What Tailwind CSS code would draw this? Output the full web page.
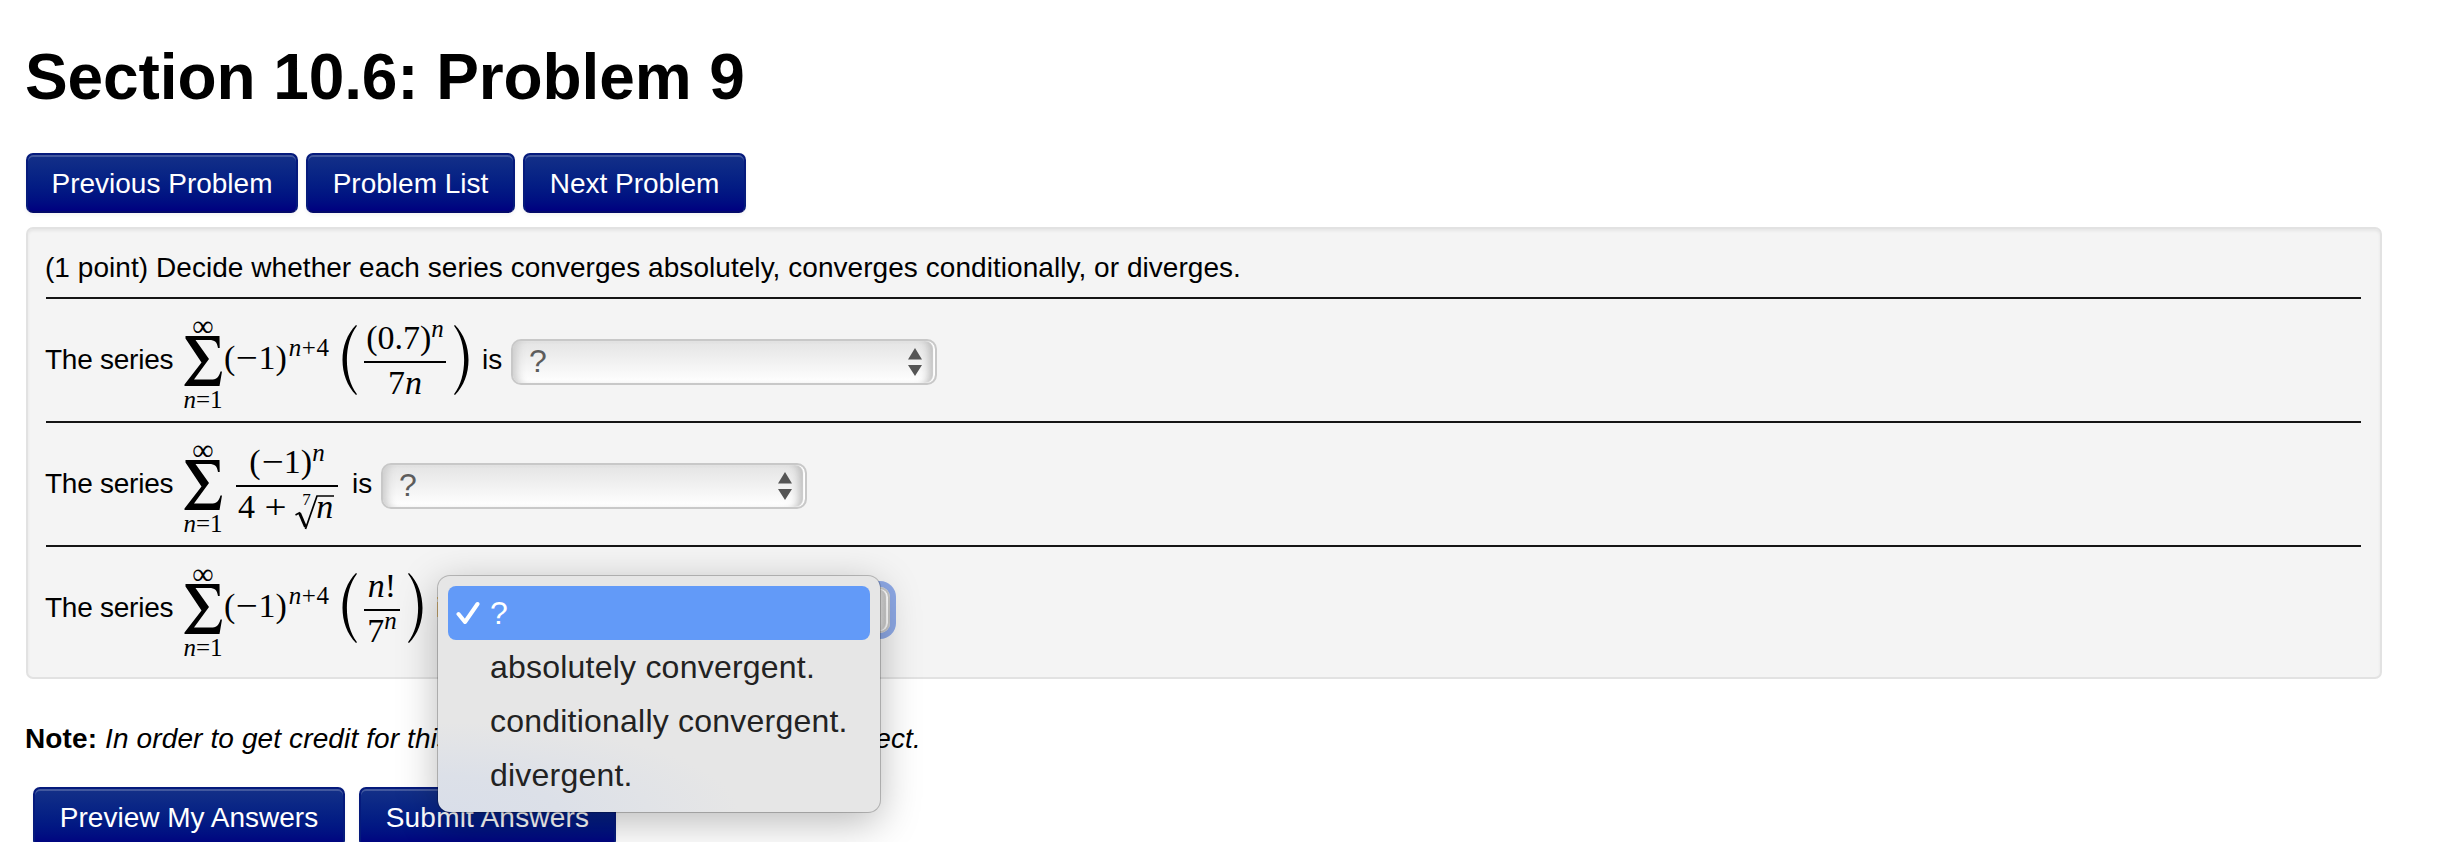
<!DOCTYPE html>
<html lang="en">
<head>
<meta charset="utf-8">
<title>Section 10.6: Problem 9</title>
<script src="https://cdn.jsdelivr.net/npm/@tailwindcss/browser@4"></script>
</head>
<body class="bg-white text-black">
<div class="relative h-[842px] w-[2456px] overflow-hidden pl-[26px] pt-[45px] font-['Liberation_Sans',Arial,sans-serif] text-[28px]">
  <svg class="hidden">
    <symbol id="sigma" viewBox="0 0 38 50"><path d="M1.500 0H35.500L35.700 12H34C33 6 31 4 25 4H11.500L25 23L10 43.500H27C32 43.500 34.500 42 36.500 35.500H38L35.500 50H0.500V48.500L17.500 26.500L1.500 2.500Z"/></symbol>
    <symbol id="lparen" viewBox="0 0 15 70"><path d="M14 0C-4 18 -4 52 14 70L15 69.300C1.500 52 1.500 18 15 0.700Z"/></symbol>
    <symbol id="rparen" viewBox="0 0 15 70"><path d="M1 0C19 18 19 52 1 70L0 69.300C13.500 52 13.500 18 0 0.700Z"/></symbol>
    <symbol id="arrows" viewBox="0 0 14 28"><path d="M7 0L14 11.500H0ZM7 28L14 17H0Z"/></symbol>
  </svg>

  <h1 class="-ml-px whitespace-nowrap text-[64px] leading-[64px] font-bold tracking-[-0.1px]">Section 10.6: Problem 9</h1>

  <nav class="mt-[44px] flex gap-2 text-white">
    <a class="flex h-[60px] w-[272px] items-center justify-center rounded-[7px] border-2 border-[#051a7c] border-b-[#030a6a] bg-linear-to-b from-[#143088] to-[#000080] pt-[2px] whitespace-nowrap shadow-[inset_0_2px_0_rgba(255,255,255,0.2),0_2px_4px_rgba(0,0,0,0.05)]">Previous Problem</a>
    <a class="flex h-[60px] w-[209px] items-center justify-center rounded-[7px] border-2 border-[#051a7c] border-b-[#030a6a] bg-linear-to-b from-[#143088] to-[#000080] pt-[2px] whitespace-nowrap shadow-[inset_0_2px_0_rgba(255,255,255,0.2),0_2px_4px_rgba(0,0,0,0.05)]">Problem List</a>
    <a class="flex h-[60px] w-[223px] items-center justify-center rounded-[7px] border-2 border-[#051a7c] border-b-[#030a6a] bg-linear-to-b from-[#143088] to-[#000080] pt-[2px] whitespace-nowrap shadow-[inset_0_2px_0_rgba(255,255,255,0.2),0_2px_4px_rgba(0,0,0,0.05)]">Next Problem</a>
  </nav>

  <main class="mt-[14px] h-[452px] w-[2356px] rounded-[7px] border-2 border-[#e2e2e2] bg-[#f4f4f4] pl-[18px] pr-[19px] pt-[19px] shadow-[inset_0_2px_3px_rgba(0,0,0,0.06)]">
    <p class="-ml-px mb-[9px] whitespace-nowrap leading-[40px] tracking-[0.05px]">(1 point) Decide whether each series converges absolutely, converges conditionally, or diverges.</p>

    <div class="flex h-[124px] items-center border-t-2 border-[#151515] whitespace-nowrap">
      <span class="-ml-px w-[138px] tracking-[-0.25px]">The series</span>
      <div class="flex w-[40px] flex-col items-center pt-[2px] font-['Liberation_Serif',serif] text-[25px] leading-[25px]">
        <span class="h-[25px] text-[30px] leading-[29px]">∞</span>
        <svg class="h-[50px] w-[38px]"><use href="#sigma"/></svg>
        <span class="h-[25px] leading-[28px]"><i>n</i>=1</span>
      </div>
      <div class="w-[119px] pb-[5px] pl-[1px] font-['Liberation_Serif',serif] text-[34px]">(<span class="mx-[2px] inline-block scale-x-115">−</span>1)<span class="ml-[2px] align-[13px] text-[25px] leading-[0]"><i>n</i><span class="mx-[0.5px]">+</span>4</span></div>
      <svg class="h-[70px] w-[15px]"><use href="#lparen"/></svg>
      <div class="ml-[7px] flex w-[82px] flex-col items-center font-['Liberation_Serif',serif] text-[34px] leading-[36px]">
        <span class="mb-[5px] h-[36px]">(0.7)<i class="align-[12px] text-[25px] leading-[0]">n</i></span>
        <span class="h-[2px] w-full bg-black"></span>
        <span class="mt-[2px] h-[36px]">7<i>n</i></span>
      </div>
      <svg class="ml-[8px] h-[70px] w-[15px]"><use href="#rparen"/></svg>
      <span class="ml-[13px] w-[29px]">is</span>
      <div class="mt-[4px] flex h-[46px] w-[426px] items-center justify-between rounded-[10px] border-2 border-[#c8c8c8] bg-linear-to-b from-[#e4e4e4] to-white pr-[13px] pl-[16px] text-[32px] leading-[42px] text-[#5c5c5c] shadow-[inset_-2px_0_1px_#fff,inset_10px_0_8px_-6px_#ccc,inset_-12px_0_8px_-6px_#bbb]">
        <span class="-mt-[2px]">?</span><svg class="h-[28px] w-[14px] fill-[#555]"><use href="#arrows"/></svg>
      </div>
    </div>

    <div class="flex h-[124px] items-center border-t-2 border-[#151515] whitespace-nowrap">
      <span class="-ml-px w-[138px] tracking-[-0.25px]">The series</span>
      <div class="flex w-[40px] flex-col items-center pt-[2px] font-['Liberation_Serif',serif] text-[25px] leading-[25px]">
        <span class="h-[25px] text-[30px] leading-[29px]">∞</span>
        <svg class="h-[50px] w-[38px]"><use href="#sigma"/></svg>
        <span class="h-[25px] leading-[28px]"><i>n</i>=1</span>
      </div>
      <div class="ml-[13px] flex w-[102px] flex-col items-center font-['Liberation_Serif',serif] text-[34px] leading-[36px]">
        <span class="mb-[5px] h-[36px]">(<span class="mx-[2px] inline-block scale-x-115">−</span>1)<i class="align-[12px] text-[25px] leading-[0]">n</i></span>
        <span class="h-[2px] w-full bg-black"></span>
        <div class="mt-[2px] flex h-[36px] w-full pl-[2px]">
          <span>4</span><span class="ml-[11px] inline-block scale-x-115">+</span>
          <div class="relative ml-[10px] w-[41px] pl-[21px]">
            <span class="absolute top-[2px] left-[7px] text-[17px] leading-[17px]">7</span>
            <svg class="absolute top-[6px] left-0 h-[35px] w-[40px] fill-none stroke-black" viewBox="0 0 40 35"><path stroke-width="1.500" d="M0.500 20L5 17.500"/><path stroke-width="3" d="M4.500 18L10.500 32"/><path stroke-width="1.700" d="M10.500 34L22 1H39"/></svg>
            <i>n</i>
          </div>
        </div>
      </div>
      <span class="ml-[14px] w-[29px]">is</span>
      <div class="mt-[4px] flex h-[46px] w-[426px] items-center justify-between rounded-[10px] border-2 border-[#c8c8c8] bg-linear-to-b from-[#e4e4e4] to-white pr-[13px] pl-[16px] text-[32px] leading-[42px] text-[#5c5c5c] shadow-[inset_-2px_0_1px_#fff,inset_10px_0_8px_-6px_#ccc,inset_-12px_0_8px_-6px_#bbb]">
        <span class="-mt-[2px]">?</span><svg class="h-[28px] w-[14px] fill-[#555]"><use href="#arrows"/></svg>
      </div>
    </div>

    <div class="flex h-[124px] items-center border-t-2 border-[#151515] whitespace-nowrap">
      <span class="-ml-px w-[138px] tracking-[-0.25px]">The series</span>
      <div class="flex w-[40px] flex-col items-center pt-[2px] font-['Liberation_Serif',serif] text-[25px] leading-[25px]">
        <span class="h-[25px] text-[30px] leading-[29px]">∞</span>
        <svg class="h-[50px] w-[38px]"><use href="#sigma"/></svg>
        <span class="h-[25px] leading-[28px]"><i>n</i>=1</span>
      </div>
      <div class="w-[119px] pb-[5px] pl-[1px] font-['Liberation_Serif',serif] text-[34px]">(<span class="mx-[2px] inline-block scale-x-115">−</span>1)<span class="ml-[2px] align-[13px] text-[25px] leading-[0]"><i>n</i><span class="mx-[0.5px]">+</span>4</span></div>
      <svg class="h-[70px] w-[15px]"><use href="#lparen"/></svg>
      <div class="ml-[7px] flex w-[36px] flex-col items-center font-['Liberation_Serif',serif] text-[34px] leading-[36px]">
        <span class="mb-[5px] h-[36px]"><i>n</i>!</span>
        <span class="h-[2px] w-full bg-black"></span>
        <span class="mt-[2px] h-[36px]">7<i class="align-[13px] text-[25px] leading-[0]">n</i></span>
      </div>
      <svg class="ml-[8px] h-[70px] w-[15px]"><use href="#rparen"/></svg>
      <span class="ml-[13px] w-[28px]">is</span>
      <div class="mt-[4px] h-[46px] w-[426px] rounded-[10px] border-2 border-[#c8c8c8] bg-linear-to-b from-[#e4e4e4] to-white shadow-[inset_-2px_0_1px_#fff,inset_-12px_0_8px_-6px_#bbb,0_0_0_6px_#8ea9e6]"></div>
    </div>
  </main>

  <p class="mt-[40px] -ml-px whitespace-nowrap leading-[40px] tracking-[0.12px]"><b>Note:</b> <i>In order to get credit for this problem all answers must be correct.</i></p>

  <div class="mt-[28px] ml-[7px] flex gap-[14px] text-white">
    <a class="flex h-[60px] w-[312px] items-center justify-center rounded-[7px] border-2 border-[#051a7c] border-b-[#030a6a] bg-linear-to-b from-[#143088] to-[#000080] pt-[2px] whitespace-nowrap shadow-[inset_0_2px_0_rgba(255,255,255,0.2),0_2px_4px_rgba(0,0,0,0.05)]">Preview My Answers</a>
    <a class="flex h-[60px] w-[257px] items-center justify-center rounded-[7px] border-2 border-[#051a7c] border-b-[#030a6a] bg-linear-to-b from-[#143088] to-[#000080] pt-[2px] tracking-[0.2px] whitespace-nowrap shadow-[inset_0_2px_0_rgba(255,255,255,0.2),0_2px_4px_rgba(0,0,0,0.05)]">Submit Answers</a>
  </div>

  <ul class="absolute top-[576px] left-[438px] h-[236px] w-[442px] rounded-[12px] bg-[#e6e6e6] bg-[radial-gradient(ellipse_300px_90px_at_0%_100%,#d9dee9_0%,#dce0e8_40%,#e6e6e6_100%)] px-[10px] pt-[10px] text-[32px] leading-[54px] tracking-[0.22px] whitespace-nowrap text-[#222] shadow-[0_0_0_1px_rgba(0,0,0,0.22),0_10px_40px_rgba(0,0,0,0.28)]">
    <li class="flex h-[54px] items-center rounded-[8px] bg-[#629af8] pl-[8px] text-white">
      <svg class="mr-[10px] h-[24px] w-[24px] fill-none stroke-white" viewBox="0 0 24 24"><path stroke-width="4" stroke-linecap="round" stroke-linejoin="round" d="M2.500 13L9 21L21.500 3"/></svg>?
    </li>
    <li class="pl-[42px]">absolutely convergent.</li>
    <li class="pl-[42px]">conditionally convergent.</li>
    <li class="pl-[42px]">divergent.</li>
  </ul>
</div>
</body>
</html>
